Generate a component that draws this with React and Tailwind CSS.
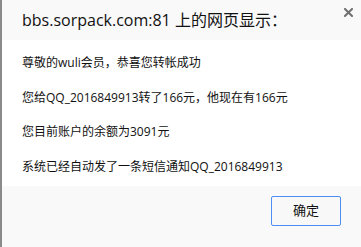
import React from "react";

const font = {
  fontFamily: '"Segoe UI", "Open Sans", "Noto Sans CJK SC", sans-serif',
};

const lines = [
  "尊敬的wuli会员，恭喜您转帐成功",
  "您给QQ_2016849913转了166元，他现在有166元",
  "您目前账户的余额为3091元",
  "系统已经自动发了一条短信通知QQ_2016849913",
];

const App = () => {
  return (
    <div
      className="flex h-[247px] w-[361px] flex-col overflow-hidden border-l-2 border-[#8a8a8a] text-[#000]"
      style={font}
    >
      {/* HEADER */}
      <div className="relative flex h-[40px] items-center bg-[#f9f9f9] pl-[20px]">
        <span className="text-[16px] leading-[20px] text-[#111]">
          bbs.sorpack.com:81 上的网页显示：
        </span>
        <svg
          className="absolute right-[8px] top-[8px]"
          width="9"
          height="9"
          viewBox="0 0 9 9"
        >
          <path
            d="M1 1L8 8M8 1L1 8"
            stroke="#6f6f6f"
            strokeWidth="2"
            strokeLinecap="square"
          />
        </svg>
      </div>

      {/* MESSAGE */}
      <div className="flex h-[146px] flex-col gap-[17.5px] bg-white pl-[20px] pt-[14px]">
        {lines.map((line) => (
          <div key={line} className="text-[12px] leading-[17px] text-[#111]">
            {line}
          </div>
        ))}
      </div>

      {/* FOOTER */}
      <div className="flex flex-1 items-start justify-end bg-[#f9f9f9] pr-[20px] pt-[10px]">
        <button className="h-[30px] w-[70px] rounded-[2px] border border-[#4d8ef5] bg-[#f8f8f8] text-[13px] text-[#111]">
          确定
        </button>
      </div>
    </div>
  );
};

export default App;
